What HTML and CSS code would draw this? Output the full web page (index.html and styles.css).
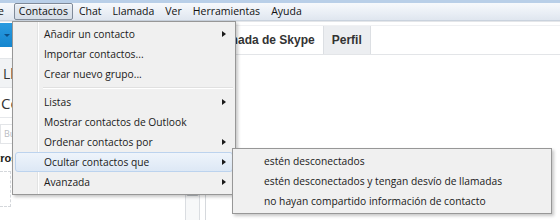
FILE: index.html
```html
<!DOCTYPE html>
<html lang="es">
<head>
<meta charset="utf-8">
<title>Skype - Contactos</title>
<link rel="stylesheet" href="styles.css">
</head>
<body>
<div class="window">
  <div class="titlebar"></div>
  <nav class="menubar">
    <span class="mi mi-first">Skype</span>
    <span class="mi mi-active">Contactos</span>
    <span class="mi">Chat</span>
    <span class="mi">Llamada</span>
    <span class="mi">Ver</span>
    <span class="mi">Herramientas</span>
    <span class="mi">Ayuda</span>
  </nav>
  <div class="main">
    <aside class="side">
      <div class="status"><span class="status-arrow"></span></div>
      <div class="side-row side-row-l">Llamar a teléfonos</div>
      <div class="side-row side-row-c">Contactos</div>
      <div class="side-search">Buscar</div>
      <div class="side-body">
        <div class="side-list">
          <div class="group"><span class="group-text">Otros contactos</span></div>
          <div class="dashed"></div>
        </div>
        <div class="scrollbar"><div class="thumb"></div></div>
      </div>
    </aside>
    <section class="pane">
      <div class="tabs">
        <span class="tab tab-first">Llamada de Skype</span>
        <span class="tab tab-perfil">Perfil</span>
      </div>
    </section>
  </div>

  <div class="menu">
    <div class="item"><span class="label">Añadir un contacto</span><span class="arrow"></span></div>
    <div class="item"><span class="label">Importar contactos...</span></div>
    <div class="item"><span class="label">Crear nuevo grupo...</span></div>
    <div class="sep"></div>
    <div class="item"><span class="label">Listas</span><span class="arrow"></span></div>
    <div class="item"><span class="label">Mostrar contactos de Outlook</span></div>
    <div class="item"><span class="label">Ordenar contactos por</span><span class="arrow"></span></div>
    <div class="item item-hot"><span class="label">Ocultar contactos que</span><span class="arrow"></span></div>
    <div class="item"><span class="label">Avanzada</span><span class="arrow"></span></div>
  </div>

  <div class="submenu">
    <div class="item"><span class="label">estén desconectados</span></div>
    <div class="item"><span class="label">estén desconectados y tengan desvío de llamadas</span></div>
    <div class="item"><span class="label">no hayan compartido información de contacto</span></div>
  </div>
</div>
</body>
</html>
```
FILE: styles.css
```css
html, body {
  margin: 0;
  padding: 0;
  background: #ffffff;
}
body {
  width: 560px;
  height: 220px;
  overflow: hidden;
  font-family: "Open Sans", "Noto Sans", sans-serif;
  font-size: 10.25px;
  color: #1a1a1a;
}
.window {
  position: relative;
  width: 560px;
  height: 220px;
  overflow: hidden;
  display: flex;
  flex-direction: column;
}
.titlebar {
  height: 3px;
  background: #b9cfe8;
  flex: none;
}
.menubar {
  height: 17px;
  flex: none;
  display: flex;
  align-items: center;
  background: linear-gradient(#f7f9fc, #e9eef5 60%, #dfe6ef);
  border-bottom: 1px solid #c9d2dd;
  overflow: hidden;
  font-size: 10.5px;
}
.mi {
  padding: 0 4px;
  height: 15px;
  line-height: 15px;
  border: 1px solid transparent;
  margin-right: 1px;
  white-space: nowrap;
  color: #111;
}
.mi-first {
  margin-left: -30px;
  margin-right: 5px;
}
.mi-active {
  border-color: #7f8a99;
  border-radius: 2px;
  background: linear-gradient(#e9eef4, #d5dde7);
  box-shadow: inset 0 1px 0 #f6f8fb;
}
.main {
  flex: 1;
  display: flex;
  min-height: 0;
  border-top: 1px solid #e4e6e9;
}
.side {
  width: 205px;
  flex: none;
  border-right: 1px solid #d6d9dd;
  display: flex;
  flex-direction: column;
}
.status {
  margin-top: 1px;
  height: 24px;
  background: linear-gradient(#2a9be0, #1586cf);
  display: flex;
  align-items: center;
  padding-left: 4px;
}
.status-arrow {
  width: 0;
  height: 0;
  border-left: 3px solid transparent;
  border-right: 3px solid transparent;
  border-top: 3px solid #0d4f86;
}
.side-row {
  height: 28px;
  display: flex;
  align-items: center;
  padding-left: 3px;
  font-size: 14px;
  color: #333;
  white-space: nowrap;
  border-bottom: 1px solid #e6e8eb;
}
.side-row-l {
  margin-top: 11px;
  background: #f1f3f5;
  border-top: 1px solid #e3e6e9;
}
.side-row-c {
  margin-top: 1px;
  font-size: 15px;
  padding-left: 1px;
}
.side-search {
  margin: 6px 20px 0 0;
  height: 18px;
  border: 1px solid #e3e5e8;
  color: #b9bdc2;
  font-size: 9px;
  line-height: 18px;
  padding-left: 3px;
}
.side-body {
  flex: 1;
  display: flex;
  min-height: 0;
}
.side-list {
  flex: 1;
  display: flex;
  flex-direction: column;
}
.group {
  height: 18px;
  margin-top: 5px;
  display: flex;
  align-items: center;
  overflow: hidden;
  font-family: "Liberation Sans", sans-serif;
  font-weight: bold;
  font-size: 11px;
  white-space: nowrap;
}
.group-text {
  margin-left: -12px;
}
.dashed {
  margin-top: 4px;
  width: 10px;
  height: 34px;
  border: 1px dashed #d4d7db;
  border-left: none;
}
.scrollbar {
  width: 13px;
  margin-right: 5px;
  border-left: 1px solid #dadde1;
  border-right: 1px solid #dadde1;
  background: #f7f8f9;
}
.thumb {
  margin-top: 38px;
  height: 12px;
  border: 1px solid #b9bdc3;
  border-radius: 2px;
  background: linear-gradient(to right, #eef0f2, #dfe2e6);
}
.pane {
  flex: 1;
  display: flex;
  flex-direction: column;
}
.tabs {
  margin-top: 3px;
  height: 28px;
  display: flex;
  align-items: stretch;
  border-bottom: 1px solid #e3e5e8;
  border-top: 1px solid #f0f1f3;
}
.tab {
  display: flex;
  align-items: center;
  padding: 0 8px;
  font-family: "Liberation Sans", sans-serif;
  font-weight: bold;
  font-size: 12px;
  color: #333;
  white-space: nowrap;
}
.tab-first {
  margin-left: -4px;
}
.tab-perfil {
  background: #eceef1;
  border-left: 1px solid #dcdfe3;
  border-right: 1px solid #dcdfe3;
  margin-left: 0;
}
.menu, .submenu {
  position: absolute;
  box-sizing: border-box;
  border: 1px solid #979797;
  padding: 2px;
  background:
    linear-gradient(to right, transparent 24px, #e2e3e3 24px, #e2e3e3 25px, #ffffff 25px, #ffffff 26px, transparent 26px),
    #f0f0f0;
  box-shadow: 2px 2px 3px rgba(0, 0, 0, 0.22);
}
.menu {
  left: 12px;
  top: 21px;
  width: 224px;
}
.submenu {
  left: 232px;
  top: 148px;
  width: 320px;
  background: #f0f0f0;
}
.item {
  height: 20px;
  box-sizing: border-box;
  display: flex;
  align-items: center;
  justify-content: space-between;
  padding: 0 6px 0 28px;
  border: 1px solid transparent;
  border-radius: 3px;
  white-space: nowrap;
}
.item-hot {
  border-color: #bcd3ee;
  background: linear-gradient(#eef4fb, #dde8f5);
}
.arrow {
  width: 0;
  height: 0;
  border-left: 4px solid #1a1a1a;
  border-top: 3.5px solid transparent;
  border-bottom: 3.5px solid transparent;
}
.sep {
  height: 8px;
  display: flex;
  flex-direction: column;
  justify-content: center;
  padding-left: 28px;
}
.sep::before {
  content: "";
  display: block;
  border-top: 1px solid #e0e0e0;
  border-bottom: 1px solid #ffffff;
}
```
